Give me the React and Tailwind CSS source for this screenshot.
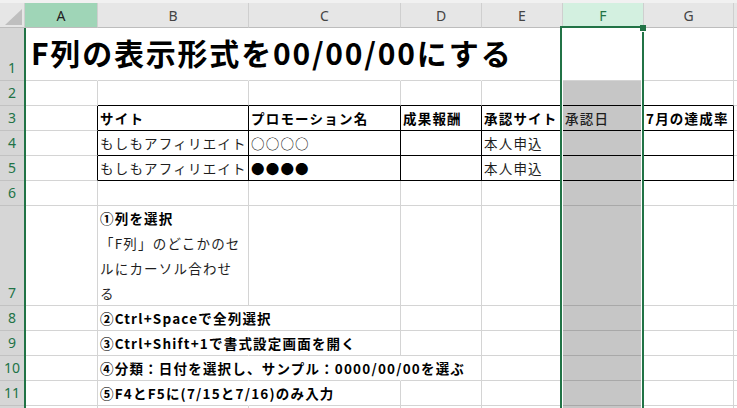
import React from "react";

const G = "border-r-[#d4d4d4]";
const GB = "border-b-[#d4d4d4]";
const BK = "border-r-black";
const BKB = "border-b-black";
const NONE = "border-r-transparent";
const FB = "border-b-[#a8a8a8]";
const GRAY = "bg-[#c6c6c6]";

const txt = "text-[13.5px] tracking-[1.2px] text-[#1e1e1e] whitespace-nowrap pl-[2px]";
const bold = "text-[13.5px] tracking-[1.2px] text-black font-bold whitespace-nowrap pl-[2px]";

function Cell({ w, r = G, b = GB, bg = "", className = "", children }) {
  return (
    <div className={`shrink-0 h-full border-r border-b flex items-center ${w} ${r} ${b} ${bg} ${className}`}>
      {children}
    </div>
  );
}

function Row({ n, h, children }) {
  return (
    <div className={`flex ${h}`}>
      <div className="w-[26px] shrink-0 border-r-2 border-r-[#217346]">
        <div className="h-full bg-[#d6d6d6] border-b border-b-[#c2c2c2] flex items-end justify-center pb-[3px] text-[14px] leading-[18px] text-[#217346] font-['Noto_Sans',sans-serif]">
          {n}
        </div>
      </div>
      {children}
      <div className="flex-1 h-full border-b border-b-[#d4d4d4]" />
    </div>
  );
}

function Head({ w, label, className = "bg-[#e6e6e6] text-[#444]" }) {
  return (
    <div className={`shrink-0 h-full border-r border-r-[#cfcfcf] border-b border-b-[#bdbdbd] flex items-center justify-center text-[14px] font-['Noto_Sans',sans-serif] ${w} ${className}`}>
      {label}
    </div>
  );
}

export default function App() {
  return (
    <div className="relative w-[737px] h-[408px] overflow-hidden bg-white font-['Noto_Sans_CJK_JP','Noto_Sans',sans-serif]">
      {/* column headers */}
      <div className="flex h-[28px] pt-[3px] bg-[#f1f1f1]">
        <div className="w-[25px] shrink-0 h-full bg-[#e6e6e6] border-r border-r-[#cfcfcf] border-b border-b-[#bdbdbd] flex items-end justify-end pr-[2px] pb-[2px]">
          <svg width="17" height="16" viewBox="0 0 17 16">
            <polygon points="17,0 17,16 0,16" fill="#bfbfbf" />
          </svg>
        </div>
        <Head w="w-[73px]" label="A" className="bg-[#9fd5b7] text-[#222]" />
        <Head w="w-[151px]" label="B" />
        <Head w="w-[152px]" label="C" />
        <Head w="w-[81px]" label="D" />
        <Head w="w-[81px]" label="E" />
        <Head w="w-[81px]" label="F" className="bg-[#d3f0e0] text-[#217346]" />
        <Head w="w-[90px]" label="G" />
        <div className="flex-1 h-full bg-[#e6e6e6] border-b border-b-[#bdbdbd]" />
      </div>

      {/* row 1 */}
      <Row n="1" h="h-[53px]">
        <Cell w="w-[72px]" r={NONE} className="items-center pb-[4px]">
          <span className="pl-[5px] text-[30px] leading-[36px] tracking-[1.8px] font-bold text-black whitespace-nowrap">
            F列の表示形式を00/00/00にする
          </span>
        </Cell>
        <Cell w="w-[151px]" r={NONE} />
        <Cell w="w-[152px]" r={NONE} />
        <Cell w="w-[81px]" r={NONE} />
        <Cell w="w-[81px]" />
        <Cell w="w-[81px]" />
        <Cell w="w-[90px]" />
      </Row>

      {/* row 2 */}
      <Row n="2" h="h-[25px]">
        <Cell w="w-[72px]" />
        <Cell w="w-[151px]" b={BKB} />
        <Cell w="w-[152px]" b={BKB} />
        <Cell w="w-[81px]" b={BKB} />
        <Cell w="w-[81px]" b={BKB} />
        <Cell w="w-[81px]" b={BKB} bg={GRAY} />
        <Cell w="w-[90px]" b={BKB} />
      </Row>

      {/* row 3 */}
      <Row n="3" h="h-[25px]">
        <Cell w="w-[72px]" r={BK} />
        <Cell w="w-[151px]" r={BK} b={BKB}>
          <span className={bold}>サイト</span>
        </Cell>
        <Cell w="w-[152px]" r={BK} b={BKB}>
          <span className={bold}>プロモーション名</span>
        </Cell>
        <Cell w="w-[81px]" r={BK} b={BKB}>
          <span className={bold}>成果報酬</span>
        </Cell>
        <Cell w="w-[81px]" r={BK} b={BKB}>
          <span className={bold}>承認サイト</span>
        </Cell>
        <Cell w="w-[81px]" r={BK} b={BKB} bg={GRAY}>
          <span className={`${txt} font-medium text-[#1a1a1a]`}>承認日</span>
        </Cell>
        <Cell w="w-[90px]" r={BK} b={BKB}>
          <span className={bold}>7月の達成率</span>
        </Cell>
      </Row>

      {/* rows 4, 5 */}
      {[
        ["4", "○○○○"],
        ["5", "●●●●"],
      ].map(([n, marks]) => (
        <Row key={n} n={n} h="h-[25px]">
          <Cell w="w-[72px]" r={BK} />
          <Cell w="w-[151px]" r={BK} b={BKB} className="overflow-hidden">
            <span className={txt}>もしもアフィリエイト</span>
          </Cell>
          <Cell w="w-[152px]" r={BK} b={BKB}>
            <span className={`${txt} text-black`}>{marks}</span>
          </Cell>
          <Cell w="w-[81px]" r={BK} b={BKB} />
          <Cell w="w-[81px]" r={BK} b={BKB}>
            <span className={txt}>本人申込</span>
          </Cell>
          <Cell w="w-[81px]" r={BK} b={BKB} bg={GRAY} />
          <Cell w="w-[90px]" r={BK} b={BKB} />
        </Row>
      ))}

      {/* row 6 */}
      <Row n="6" h="h-[25px]">
        <Cell w="w-[72px]" />
        <Cell w="w-[151px]" />
        <Cell w="w-[152px]" />
        <Cell w="w-[81px]" />
        <Cell w="w-[81px]" />
        <Cell w="w-[81px]" b={FB} bg={GRAY} />
        <Cell w="w-[90px]" />
      </Row>

      {/* row 7 */}
      <Row n="7" h="h-[100px]">
        <Cell w="w-[72px]" />
        <Cell w="w-[151px]" className="!items-start">
          <div className="flex flex-col leading-[25px]">
            <span className={bold}>①列を選択</span>
            <span className={txt}>「F列」のどこかのセ</span>
            <span className={txt}>ルにカーソル合わせ</span>
            <span className={txt}>る</span>
          </div>
        </Cell>
        <Cell w="w-[152px]" />
        <Cell w="w-[81px]" />
        <Cell w="w-[81px]" />
        <Cell w="w-[81px]" b={FB} bg={GRAY} />
        <Cell w="w-[90px]" />
      </Row>

      {/* rows 8 - 11 */}
      {[
        ["8", "②Ctrl+Spaceで全列選択", false],
        ["9", "③Ctrl+Shift+1で書式設定画面を開く", false],
        ["10", "④分類：日付を選択し、サンプル：0000/00/00を選ぶ", true],
        ["11", "⑤F4とF5に(7/15と7/16)のみ入力", false],
      ].map(([n, text, wide]) => (
        <Row key={n} n={n} h="h-[25px]">
          <Cell w="w-[72px]" />
          <Cell w="w-[151px]" r={NONE}>
            <span className={bold}>{text}</span>
          </Cell>
          <Cell w="w-[152px]" r={wide ? NONE : G} />
          <Cell w="w-[81px]" />
          <Cell w="w-[81px]" />
          <Cell w="w-[81px]" b={FB} bg={GRAY} />
          <Cell w="w-[90px]" />
        </Row>
      ))}

      {/* row 12 (only its top edge is in view) */}
      <Row n="" h="h-[25px]">
        <Cell w="w-[72px]" />
        <Cell w="w-[151px]" />
        <Cell w="w-[152px]" />
        <Cell w="w-[81px]" />
        <Cell w="w-[81px]" />
        <Cell w="w-[81px]" b={FB} bg={GRAY} />
        <Cell w="w-[90px]" />
      </Row>

      {/* column F selection */}
      <div className="absolute top-[26px] left-[560px] w-[84px] h-[400px] border-x-2 border-t-2 border-[#217346]">
        <div className="h-full border-x border-white" />
      </div>
      <div className="absolute top-[25px] left-[640px] w-[6px] h-[7px] bg-[#217346] border-b border-white" />
    </div>
  );
}
